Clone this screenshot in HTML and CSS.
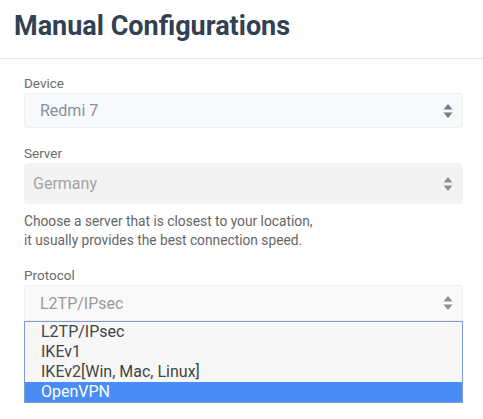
FILE: index.html
```html
<!DOCTYPE html>
<html lang="en">
<head>
    <meta charset="UTF-8">
    <meta name="viewport" content="width=device-width, initial-scale=1.0">
    <title>Manual Configurations</title>
    <link rel="stylesheet" href="styles.css">
</head>
<body>
    <div class="page-header">
        <h1>Manual Configurations</h1>
    </div>

    <form class="config-form">
        <div class="field">
            <label for="device">Device</label>
            <div class="select-wrap">
                <select id="device" class="form-select">
                    <option>Redmi 7</option>
                </select>
                <svg class="arrows" viewBox="0 0 10 16" width="10" height="16"><path d="M5 1 L9.5 6.5 H0.5 Z M5 15 L9.5 9.5 H0.5 Z"/></svg>
            </div>
        </div>

        <div class="field">
            <label for="server">Server</label>
            <div class="select-wrap">
                <select id="server" class="form-select server-select" disabled>
                    <option>Germany</option>
                </select>
                <svg class="arrows" viewBox="0 0 10 16" width="10" height="16"><path d="M5 1 L9.5 6.5 H0.5 Z M5 15 L9.5 9.5 H0.5 Z"/></svg>
            </div>
            <p class="hint">
                Choose a server that is closest to your location,<br>
                it usually provides the best connection speed.
            </p>
        </div>

        <div class="field">
            <label for="protocol">Protocol</label>
            <div class="select-wrap">
                <select id="protocol" class="form-select protocol-select">
                    <option>L2TP/IPsec</option>
                </select>
                <svg class="arrows" viewBox="0 0 10 16" width="10" height="16"><path d="M5 1 L9.5 6.5 H0.5 Z M5 15 L9.5 9.5 H0.5 Z"/></svg>
            </div>
            <ul class="dropdown">
                <li>L2TP/IPsec</li>
                <li>IKEv1</li>
                <li>IKEv2[Win, Mac, Linux]</li>
                <li class="selected">OpenVPN</li>
            </ul>
        </div>
    </form>
</body>
</html>
```

FILE: styles.css
```css
* {
    margin: 0;
    padding: 0;
    box-sizing: border-box;
}

body {
    font-family: Roboto, 'Liberation Sans', sans-serif;
    background: #fff;
    color: #444;
}

.page-header {
    padding: 10px 14px 0;
    height: 59px;
    border-bottom: 1px solid #e6e6e6;
}

h1 {
    font-size: 27px;
    font-weight: 700;
    color: #333f52;
    line-height: 32px;
}

.config-form {
    padding: 16px 20px 0 24px;
}

.field {
    margin-bottom: 17px;
}

label {
    display: block;
    font-size: 13.5px;
    color: #6b6b6b;
    line-height: 16px;
    margin-bottom: 2px;
}

.select-wrap {
    position: relative;
}

.form-select {
    appearance: none;
    -webkit-appearance: none;
    width: 100%;
    height: 35px;
    padding: 0 15px;
    font-family: inherit;
    font-size: 16px;
    color: #8790a0;
    background: #f8f9fa;
    border: 1px solid #eeeff1;
    border-radius: 3px;
    outline: none;
}

.server-select {
    height: 41px;
    padding: 0 8px;
    background: #f3f3f3;
    border-color: #f3f3f3;
    color: #a3a3a3;
    border-radius: 4px;
    opacity: 1;
}

.protocol-select {
    height: 36px;
    color: #9a9a9a;
    background: #f9f9f9;
    border-color: #efefef;
    border-radius: 3px 3px 0 0;
}

.arrows {
    position: absolute;
    right: 10px;
    top: 50%;
    margin-top: -8px;
    fill: #6f7a8c;
}

.server-select + .arrows,
.protocol-select + .arrows {
    fill: #8a8f97;
}

.hint {
    margin-top: 8px;
    font-size: 13.75px;
    line-height: 19px;
    color: #666;
}

.dropdown {
    list-style: none;
    border: 1px solid #7b9cd3;
    background: #f7f7f7;
}

.dropdown li {
    font-size: 16px;
    line-height: 20px;
    padding: 0 16px;
    color: #444;
}

.dropdown li.selected {
    background: #4a8cf5;
    color: #fff;
}
```
